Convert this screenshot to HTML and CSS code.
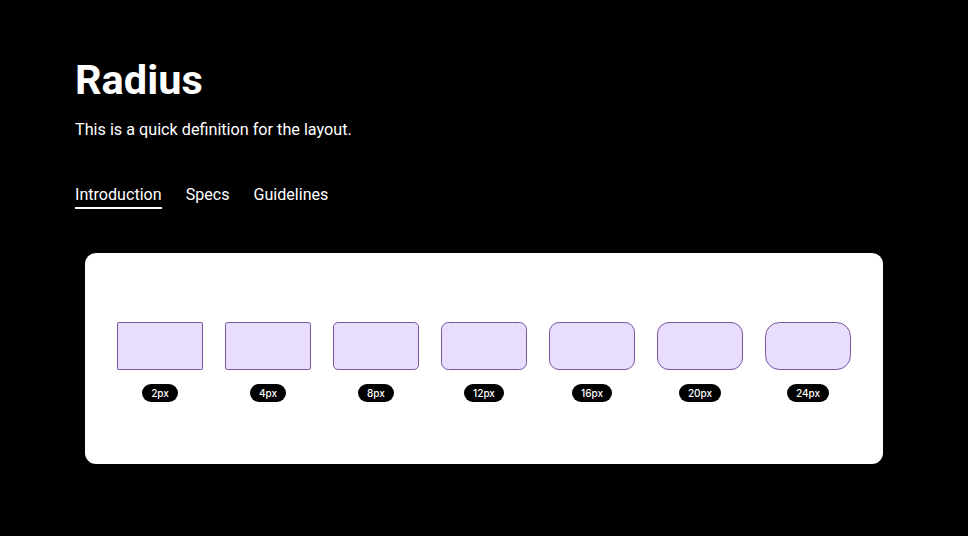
FILE: index.html
```html
<!DOCTYPE html>
<html lang="en">
<head>
<meta charset="utf-8">
<title>Radius</title>
<link rel="stylesheet" href="styles.css">
</head>
<body>
<div class="page">
  <header class="header">
    <h1 class="title">Radius</h1>
    <p class="subtitle">This is a quick definition for the layout.</p>
    <nav class="tabs">
      <span class="tab active">Introduction</span>
      <span class="tab">Specs</span>
      <span class="tab">Guidelines</span>
    </nav>
  </header>
  <section class="card">
    <div class="sample"><div class="box r2"></div><span class="pill">2px</span></div>
    <div class="sample"><div class="box r4"></div><span class="pill">4px</span></div>
    <div class="sample"><div class="box r8"></div><span class="pill">8px</span></div>
    <div class="sample"><div class="box r12"></div><span class="pill">12px</span></div>
    <div class="sample"><div class="box r16"></div><span class="pill">16px</span></div>
    <div class="sample"><div class="box r20"></div><span class="pill">20px</span></div>
    <div class="sample"><div class="box r24"></div><span class="pill">24px</span></div>
  </section>
</div>
</body>
</html>
```
FILE: styles.css
```css
* { box-sizing: border-box; }
html, body { margin: 0; padding: 0; background: #000; }
body {
  font-family: Roboto, "Liberation Sans", Arial, sans-serif;
  color: #fff;
  width: 968px;
  height: 536px;
  overflow: hidden;
}
.page { padding-top: 55px; }
.header { padding-left: 75px; }
.title {
  margin: 0;
  font-size: 41.5px;
  line-height: 50px;
  font-weight: 700;
}
.subtitle {
  margin: 15px 0 0;
  font-size: 16.2px;
  line-height: 20px;
}
.tabs {
  display: flex;
  gap: 24px;
  margin-top: 45px;
}
.tab {
  font-size: 16.1px;
  line-height: 20px;
  padding-bottom: 2px;
  border-bottom: 2px solid transparent;
}
.tab.active { border-bottom-color: #fff; }
.card {
  margin: 44px 85px 0;
  height: 211px;
  background: #fff;
  border-radius: 11px;
  padding: 69px 32px 0;
  display: flex;
  gap: 22px;
}
.sample {
  width: 86px;
  display: flex;
  flex-direction: column;
  align-items: center;
  gap: 14px;
}
.box {
  width: 86px;
  height: 48px;
  background: #e8dcff;
  border: 1px solid #7a569c;
}
.r2 { border-radius: 1.2px; }
.r4 { border-radius: 2.5px; }
.r8 { border-radius: 5px; }
.r12 { border-radius: 7.5px; }
.r16 { border-radius: 10px; }
.r20 { border-radius: 12px; }
.r24 { border-radius: 14.5px; }
.pill {
  background: #000;
  color: #fff;
  font-family: Inter, Lato, "Liberation Sans", sans-serif;
  font-weight: 500;
  font-size: 10px;
  line-height: 18px;
  height: 18px;
  padding: 0 9px;
  border-radius: 9px;
}
```
